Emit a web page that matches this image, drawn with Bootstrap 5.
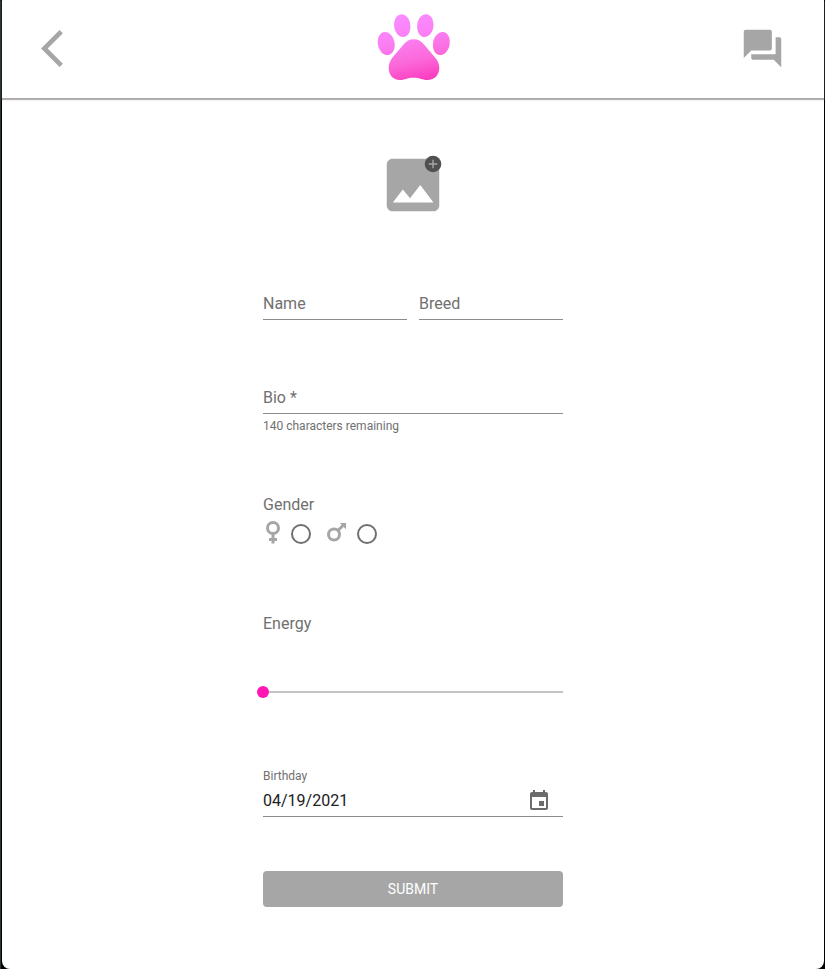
<!DOCTYPE html>
<html lang="en">
<head>
<meta charset="utf-8">
<meta name="viewport" content="width=device-width, initial-scale=1">
<title>Pet profile</title>
<link href="https://cdn.jsdelivr.net/npm/bootstrap@5.3.0/dist/css/bootstrap.min.css" rel="stylesheet">
<style>
  body { font-family: Roboto, "Liberation Sans", sans-serif; background: #000; color: #707070; border-left: 1px solid #26363a; }
  .app-window { margin: 0 1px; background: #fff; border-radius: 0 0 8px 8px; }
  .app-header { padding: 11px 39px; border-bottom: 1px solid #a9a7a9; box-shadow: 0 1px 1px #b4b2b4; }
  .icon-button { border: 0; padding: 0; background: none; color: #a6a6a6; line-height: 0; }
  .header-icon { padding-bottom: 1px; }
  .profile-form { max-width: 300px; padding: 51px 0 62px; }
  .photo-badge { position: absolute; top: 4px; right: 5px; }
  .line-field { display: grid; border-bottom: 1px solid #8c8c8c; }
  .line-field > * { grid-area: 1 / 1; height: 31px; line-height: 31px; }
  .line-field > label { pointer-events: none; }
  .line-field > input:focus + label, .line-field > input:not(:placeholder-shown) + label { visibility: hidden; }
  .line-input { width: 100%; min-width: 0; border: 0; padding: 0; background: none; color: #212121; outline: 0; }
  .field-row { gap: 12px; margin-top: 68px; }
  .bio-block { margin-top: 62px; }
  .helper { font-size: 12px; line-height: 20px; margin-top: 2px; }
  .gender-block { margin-top: 57px; }
  .gender-block legend { font-size: 16px; line-height: 24px; margin-bottom: 4px; }
  .gender-block label { line-height: 0; color: #a6a6a6; }
  .gender-block .form-check-input { width: 20px; height: 20px; border: 2px solid #707070; margin: 3px 0 0; }
  .gender-block .form-check-input:checked { background-color: #ff17b5; border-color: #ff17b5; }
  .energy-block { margin-top: 67px; }
  .energy-slider { appearance: none; -webkit-appearance: none; display: block; width: calc(100% + 12px); height: 12px; margin: 50px -6px 0; background: none; }
  .energy-slider::-webkit-slider-runnable-track { height: 2px; background: linear-gradient(#c4c4c4, #c4c4c4) center / calc(100% - 12px) 2px no-repeat; }
  .energy-slider::-webkit-slider-thumb { -webkit-appearance: none; width: 12px; height: 12px; margin-top: -5px; border: 0; border-radius: 50%; background: #ff17b5; }
  .birthday-block { margin-top: 69px; }
  .birthday-block > label { font-size: 12px; line-height: 18px; }
  .date-line { height: 32px; padding-right: 12px; border-bottom: 1px solid #8c8c8c; }
  .date-line .icon-button { color: #6c6c6c; }
  .submit-button { height: 36px; margin-top: 54px; padding: 0; border: 0; border-radius: 4px; font-size: 14px; background: #a6a6a6; color: #fff; }
</style>
<script src="https://cdn.jsdelivr.net/npm/bootstrap@5.3.0/dist/js/bootstrap.bundle.min.js"></script>
</head>
<body>
<div class="app-window min-vh-100">
  <header class="app-header d-flex justify-content-between align-items-center">
    <button type="button" class="icon-button header-icon" aria-label="Back">
      <svg class="d-block" width="45" height="45" viewBox="0 0 24 24" fill="currentColor"><path d="M11.67 3.87 9.9 2.1 0 12l9.9 9.9 1.77-1.77L3.54 12z"/></svg>
    </button>
    <a href="#" aria-label="Home">
      <svg class="d-block" width="76" height="76" viewBox="0 0 76 76">
        <defs>
          <linearGradient id="pink" gradientUnits="userSpaceOnUse" x1="30" y1="3" x2="45" y2="70">
            <stop offset="0" stop-color="#f98cff"/><stop offset=".35" stop-color="#fa80f4"/>
            <stop offset=".7" stop-color="#fb68d8"/><stop offset="1" stop-color="#fc3cc0"/>
          </linearGradient>
        </defs>
        <g fill="url(#pink)">
          <path d="M38.7 28.3C43 28.3 46 30 49 33.5L60 46.5C63 50 64.3 53 64.3 57C64.3 64 59.5 69 52.5 69C48 69 45 66.7 38.7 66.7C32 66.7 29.5 69 25 69C18 69 13.7 64 13.7 57C13.7 53 15 50 17.5 46.5L28.5 33.5C31.5 30 34.5 28.3 38.7 28.3Z"/>
          <path d="M25.5 3.4C30.5 2.7 34.7 7.5 35.3 13.5C36 20 33.5 25.3 29 25.9C24.3 26.5 19.9 22 19.2 15.8C18.5 9.5 21 4.1 25.5 3.4Z"/>
          <path d="M52.1 3.4C47.1 2.7 42.9 7.5 42.3 13.5C41.6 20 44.1 25.3 48.6 25.9C53.3 26.5 57.7 22 58.4 15.8C59.1 9.5 56.6 4.1 52.1 3.4Z"/>
          <path d="M9 21.1C13.7 20.3 18.5 25 19.5 31.3C20.5 37.8 18 43.3 13.3 44C8.7 44.7 4 40 3 33.7C2 27.2 4.4 21.9 9 21.1Z"/>
          <path d="M68.6 21.1C63.9 20.3 59.1 25 58.1 31.3C57.1 37.8 59.6 43.3 64.3 44C68.9 44.7 73.6 40 74.6 33.7C75.6 27.2 73.2 21.9 68.6 21.1Z"/>
        </g>
      </svg>
    </a>
    <button type="button" class="icon-button header-icon" aria-label="Messages">
      <svg class="d-block" width="45" height="45" viewBox="0 0 24 24" fill="currentColor"><path d="M21 6h-2v9H6v2c0 .55.45 1 1 1h11l4 4V7c0-.55-.45-1-1-1zm-4 6V3c0-.55-.45-1-1-1H3c-.55 0-1 .45-1 1v14l4-4h10c.55 0 1-.45 1-1z"/></svg>
    </button>
  </header>

  <main>
    <form class="profile-form mx-auto">
      <div class="d-flex justify-content-center">
        <button type="button" class="icon-button position-relative" aria-label="Add photo">
          <svg class="d-block" width="70" height="70" viewBox="0 0 24 24" fill="currentColor"><path d="M21 19V5c0-1.1-.9-2-2-2H5c-1.1 0-2 .9-2 2v14c0 1.1.9 2 2 2h14c1.1 0 2-.9 2-2z"/><path fill="#fff" d="M5.1 18 8.5 13.5l2.5 3.01L14.5 12l4.5 6z"/></svg>
          <svg class="photo-badge" width="20" height="20" viewBox="0 0 20 20"><circle cx="10" cy="10" r="8.3" fill="#505050"/><path d="M10 5.7v8.6M5.7 10h8.6" stroke="#a6a6a6" stroke-width="1.4"/></svg>
        </button>
      </div>

      <div class="field-row d-flex">
        <div class="line-field flex-fill">
          <input class="line-input" id="name" type="text" placeholder=" ">
          <label for="name">Name</label>
        </div>
        <div class="line-field flex-fill">
          <input class="line-input" id="breed" type="text" placeholder=" ">
          <label for="breed">Breed</label>
        </div>
      </div>

      <div class="bio-block">
        <div class="line-field">
          <input class="line-input" id="bio" type="text" maxlength="140" placeholder=" " required aria-describedby="bio-help">
          <label for="bio">Bio *</label>
        </div>
        <div class="helper" id="bio-help">140 characters remaining</div>
      </div>

      <fieldset class="gender-block">
        <legend>Gender</legend>
        <div class="d-flex">
          <label for="female" aria-label="Female">
            <svg width="28" height="24" viewBox="0 0 28 24" fill="none" stroke="currentColor" stroke-width="3"><circle cx="10" cy="7" r="5.5"/><path d="M10 12.5v10M6 18.4h8"/></svg>
          </label>
          <input class="form-check-input" type="radio" name="gender" id="female">
          <label for="male" class="ms-3" aria-label="Male">
            <svg width="30" height="24" viewBox="0 0 30 24" fill="none" stroke="currentColor" stroke-width="3"><circle cx="7" cy="13.5" r="5.5"/><path d="M11 9.5l5.5-5.5"/><path d="M12.8 2h6.2v6.2z" fill="currentColor" stroke="none"/></svg>
          </label>
          <input class="form-check-input" type="radio" name="gender" id="male">
        </div>
      </fieldset>

      <div class="energy-block">
        <label class="d-block" for="energy">Energy</label>
        <input class="energy-slider" id="energy" type="range" min="0" max="10" value="0">
      </div>

      <div class="birthday-block">
        <label class="d-block" for="birthday">Birthday</label>
        <div class="date-line d-flex align-items-center">
          <input class="line-input" id="birthday" type="text" value="04/19/2021">
          <button type="button" class="icon-button" aria-label="Choose date">
            <svg width="24" height="24" viewBox="0 0 24 24" fill="currentColor"><path d="M17 12h-5v5h5v-5zM16 1v2H8V1H6v2H5c-1.11 0-1.99.9-1.99 2L3 19c0 1.1.89 2 2 2h14c1.1 0 2-.9 2-2V5c0-1.1-.9-2-2-2h-1V1h-2zm3 18H5V8h14v11z"/></svg>
          </button>
        </div>
      </div>

      <button type="submit" class="submit-button btn w-100">SUBMIT</button>
    </form>
  </main>
</div>
</body>
</html>
